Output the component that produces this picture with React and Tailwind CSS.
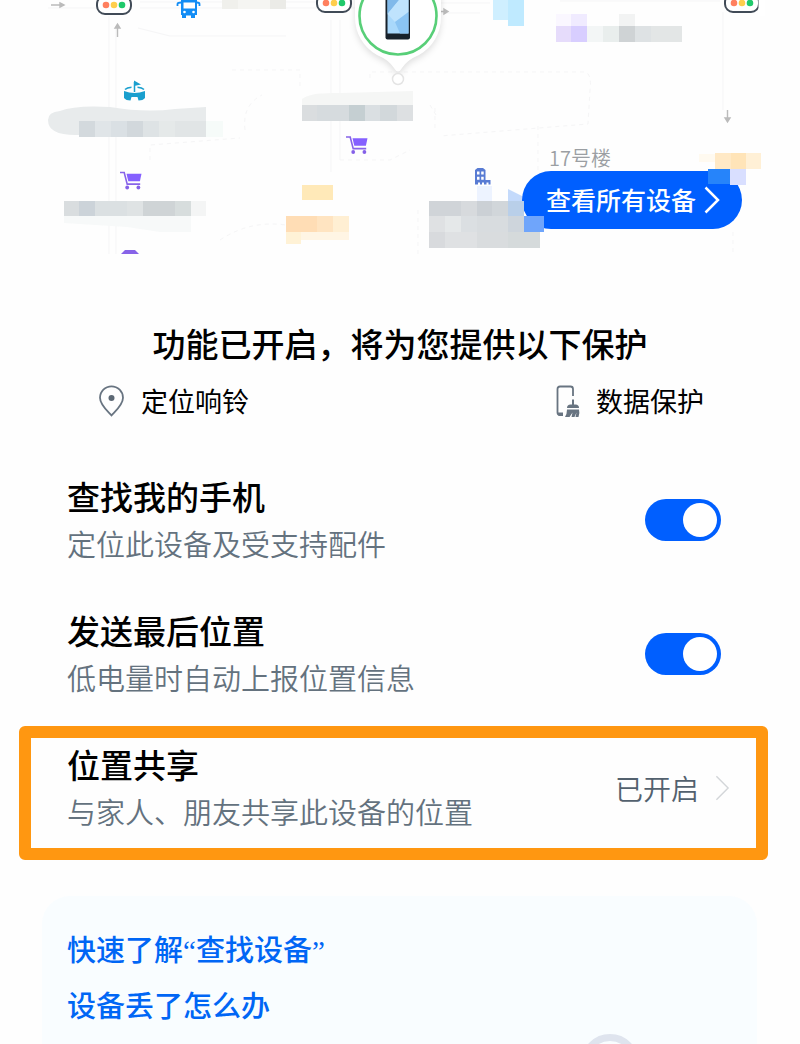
import React from "react";

const mosaic = [
  // top edge
  [222, 0, 16, 9, "#f0f0ec"], [238, 0, 32, 9, "#f5f5f2"], [270, 0, 16, 9, "#ebebe7"],
  // pale blue block
  [493, 0, 16, 20, "#cfefff"], [508, 0, 16, 26, "#bfeaff"],
  // lilac and grey strip
  [556, 14, 15, 12, "#faf7ff"], [571, 14, 16, 12, "#f0ebff"], [619, 14, 16, 12, "#f2f3f3"],
  [556, 26, 15, 16, "#e6dcfb"], [571, 26, 16, 16, "#d8ceff"], [587, 26, 16, 16, "#f3f6f6"],
  [603, 26, 16, 16, "#e9eeed"], [619, 26, 16, 16, "#cfd3d5"], [635, 26, 16, 16, "#dee2e4"],
  [651, 26, 31, 16, "#e3e6e6"],
  // left strip, lower row
  [79, 121, 16, 16, "#d3d9dd"], [95, 121, 16, 16, "#e0e5e8"], [111, 121, 16, 16, "#dae0e4"],
  [127, 121, 16, 16, "#d2d8dc"], [143, 121, 16, 16, "#dee3e5"], [159, 121, 16, 16, "#e5e9e9"],
  [175, 121, 31, 16, "#e1e5e6"], [206, 121, 17, 16, "#f6fbf9"],
  // centre strip
  [302, 105, 15, 16, "#dadddf"], [317, 105, 32, 16, "#d6dbde"], [349, 105, 16, 16, "#c5cfd2"],
  [365, 105, 15, 16, "#dadfe2"], [380, 105, 17, 16, "#d2d8db"], [397, 105, 16, 16, "#dde0e2"],
  // lower-left strip
  [64, 201, 15, 15, "#d9dddf"], [79, 201, 16, 15, "#ccd3d9"], [95, 201, 32, 15, "#dbe0e2"],
  [127, 201, 16, 15, "#dfe3e4"], [143, 201, 32, 15, "#cfd4d6"], [175, 201, 16, 15, "#d7dddd"],
  [191, 201, 15, 15, "#f4f5f5"],
  // sand blocks
  [302, 185, 31, 15, "#ffe9b8"],
  [286, 216, 31, 16, "#ffddb5"], [317, 216, 16, 16, "#ffe4c1"], [333, 216, 16, 16, "#ffefd3"],
  [286, 232, 15, 12, "#fff2d6"], [301, 232, 48, 8, "#fff5e4"],
  // grey block beside the button
  [477, 186, 15, 15, "#edf3ff"],
  [429, 201, 32, 15, "#d0d4d8"], [461, 201, 16, 15, "#d7dadd"], [477, 201, 15, 15, "#cbd0d5"],
  [492, 201, 16, 15, "#d1d6da"],
  [429, 216, 16, 16, "#dfe1e3"], [445, 216, 16, 16, "#e5e8e9"], [461, 216, 16, 16, "#dbdfe2"],
  [477, 216, 31, 16, "#d8dcdf"], [508, 216, 16, 16, "#ced5dc"],
  [429, 232, 16, 16, "#d8dadd"], [445, 232, 32, 16, "#dfe1e3"], [477, 232, 31, 16, "#d9dcde"],
];

const overlayMosaic = [
  [508, 201, 16, 15, "#b9cfe9"], [524, 216, 20, 16, "#6fa5fb"], [508, 232, 32, 16, "#d5dadb"],
  [699, 154, 16, 8, "#fffaf0"], [715, 153, 16, 16, "#ffe9c6"], [731, 153, 15, 16, "#ffe4b8"],
  [746, 153, 15, 16, "#fff0d6"],
  [708, 169, 22, 15, "#2684fa"], [730, 169, 16, 16, "#d9dfff"],
];

function Blocks({ items }) {
  return items.map(([x, y, w, h, fill]) => (
    <rect key={`${x}-${y}`} x={x} y={y} width={w} height={h} fill={fill} />
  ));
}

function TrafficLight({ x, y }) {
  return (
    <g transform={`translate(${x} ${y})`}>
      <rect x="-17" y="-9" width="34" height="18" rx="8" fill="#fff" stroke="#414b57" strokeWidth="2" />
      <circle cx="-8" r="3.3" fill="#ff805f" />
      <circle cx="0" r="3.3" fill="#ffce4d" />
      <circle cx="8" r="3.3" fill="#20c96b" />
    </g>
  );
}

function Cart({ x, y }) {
  return (
    <g transform={`translate(${x} ${y})`}>
      <path d="M0 1h4.2l3 11.6h13" fill="none" stroke="#8763e8" strokeWidth="1.6" />
      <path d="M6.5 2.2h15l-1.6 7.6H8.3z" fill="#8560ff" />
      <circle cx="7.2" cy="16" r="1.9" fill="#8560e8" />
      <circle cx="18.4" cy="16" r="1.9" fill="#8560e8" />
    </g>
  );
}

function MapDrawing() {
  return (
    <svg viewBox="0 0 800 254" className="block w-full" aria-hidden="true">
      <g fill="none" stroke="#f5f5f6" strokeWidth="1">
        <path d="M109 16V254M116 28V254M331 20V172M340 20V160M723 12V110" />
        <path d="M48 8H96M140 8H355M352 2H140M438 3H490M438 13H480M138 28L170 36H286M560 1H720" />
        <path d="M232 70H300V90M150 160V145L240 138M245 130Q242 105 262 95M370 78V72H585Q592 74 590 90L588 124L440 136M435 108V130M340 160H390L410 150" strokeDasharray="4 4" />
        <path d="M418 210V254M538 126V170M733 232V254M220 240Q250 220 286 225M430 105L436 115" strokeDasharray="4 4" />
      </g>
      <g stroke="#bbb" strokeWidth="1.4" fill="#bbb">
        <path d="M51 5H63M60 3L64 5L60 7zM117.500 37V26M115 28L117.500 24L120 28zM727.500 110V121M725 118L727.500 122L730 118zM440 11.500H446M444 9L448 11.500L444 14z" />
      </g>
      <path d="M48 120Q48 112 60 111Q75 105 110 107Q145 113 175 109L206 107V121H79V135Q48 136 48 120Z" fill="#e8ebec" />
      <path d="M64 216H191V232H160L127 227L64 223Z" fill="#f7f9f9" />
      <path d="M302 105V99Q310 92 340 93L413 91V105Z" fill="#f5f6f5" />
      <path d="M508 189L524 197V216H508Z" fill="#c4dafb" />
      <Blocks items={mosaic} />
      <TrafficLight x={114} y={5} />
      <TrafficLight x={334} y={3} />
      <TrafficLight x={742} y={3} />
      <rect x="758.500" width="6" height="16" fill="#fff" />

      <g fill="#138df5">
        <path d="M181 0H197V15H195V18H191V15.500H186V18H182V15H181Z" />
        <path d="M177.500 6V4Q177.500 2.500 181 2.500M199.500 6V4Q199.500 2.500 197 2.500" fill="none" stroke="#138df5" strokeWidth="1.800" />
        <path d="M183.500 2.500H195V8.500H183.500Z" fill="#fff" />
        <circle cx="184.500" cy="12" r="1.300" fill="#fff" />
        <circle cx="193.500" cy="12" r="1.300" fill="#fff" />
      </g>

      <g fill="#1a9fce">
        <path d="M124 91Q134.500 95 145 91V98Q143 100.500 138.500 100.500L137.500 97H131.500L130.500 100.500Q126 100.500 124 98Z" />
        <path d="M125 89.500Q127 87.500 131.500 87.200M144 89.500Q142 87.500 137.500 87.200M134.500 92V82" fill="none" stroke="#1a9fce" strokeWidth="1.500" />
        <path d="M134 80.500L141 84.500L134 86Z" />
      </g>

      <Cart x={120} y={171.500} />
      <Cart x={346} y={136} />
      <path d="M121 254L125 250H135L139 254Z" fill="#8763e8" />

      <g fill="#587bd3">
        <path d="M475 170L477.500 168H483L485.500 170V180H490.500V184.500H488.500V182.500H486.500V184.500H484V182.500H482V184.500H480V182.500H478V184.500H475Z" />
        <path d="M477 171.500h2.500v3h-2.500zM481.200 171.500h2.500v3h-2.500zM477 176.800h2.500v3h-2.500zM481.200 176.800h2.500v3h-2.500z" fill="#fff" />
      </g>

      <path
        d="M355 17A43 43 0 0 0 377 55Q389 60 394 68Q398 75 402 68Q407 60 419 55A43 43 0 0 0 441 17V-20H355Z"
        fill="#fff"
        className="drop-shadow-md"
      />
      <circle cx="398" cy="16" r="38.500" fill="#fff" stroke="#58cf78" strokeWidth="2.600" />
      <circle cx="398" cy="79" r="5.500" fill="#fff" stroke="#e4e4e4" strokeWidth="1.500" />
      <rect x="385.500" y="-8" width="24.500" height="47.500" rx="2" fill="#17212b" />
      <path d="M387.500 0H408.500V33.500H387.500Z" fill="#a9d8fb" />
      <path d="M387.500 0H399L387.500 14Z" fill="#80b9ea" />
      <path d="M399 0H408.500V12L395 22L387.500 14Z" fill="#bfe3fd" />
      <path d="M408.500 12V33.500H400L395 22Z" fill="#8bc4f3" />
    </svg>
  );
}

function Chevron({ className }) {
  return (
    <svg viewBox="0 0 16 28" className={className} fill="none" stroke="currentColor" aria-hidden="true">
      <path d="M1.500 1.500L14 14L1.500 26.500" />
    </svg>
  );
}

function SettingText({ title, detail }) {
  return (
    <span className="block">
      <span className="block text-[33px] leading-[46px] font-medium text-black">{title}</span>
      <span className="block text-[29px] leading-[48px] font-[350] text-[#64727e]">{detail}</span>
    </span>
  );
}

function ToggleRow({ title, detail }) {
  return (
    <label className="flex items-center justify-between pt-[15px] pr-[79px] pb-[25px] pl-[67px]">
      <SettingText title={title} detail={detail} />
      <input
        type="checkbox"
        role="switch"
        defaultChecked
        className="flex h-[42px] w-[76px] shrink-0 appearance-none items-center rounded-full bg-[#c5ccd3] p-1 before:size-[34px] before:rounded-full before:bg-white before:content-[''] checked:justify-end checked:bg-[#005fff]"
      />
    </label>
  );
}

export default function App() {
  return (
    <main
      lang="zh-CN"
      className="flex min-h-screen flex-col overflow-hidden bg-[#fefefe] font-['Noto_Sans_CJK_SC',sans-serif]"
    >
      <section className="relative" aria-label="地图">
        <MapDrawing />
        <span className="absolute top-[143px] right-[189px] text-[20px] leading-[30px] font-[350] text-[#9b9fa3]">
          17号楼
        </span>
        <button
          type="button"
          className="absolute top-[171px] right-[58px] flex h-[58px] w-[220px] items-center gap-2 rounded-full bg-[#005fff] pl-6 text-[25px] font-medium whitespace-nowrap text-white"
        >
          查看所有设备
          <Chevron className="h-7 w-4 stroke-[2.5]" />
        </button>
        <svg viewBox="0 0 800 254" className="pointer-events-none absolute inset-0 w-full" aria-hidden="true">
          <Blocks items={overlayMosaic} />
        </svg>
      </section>

      <h1 className="mt-[69px] text-center text-[33px] leading-[40px] font-medium text-black">
        功能已开启，将为您提供以下保护
      </h1>

      <ul className="mt-[18px] mb-[37px] flex justify-between pr-24 pl-[98px] text-[27px] leading-[40px] text-black">
        <li className="flex items-center gap-4">
          <svg viewBox="0 0 27 32" className="h-8 w-[27px]" fill="none" aria-hidden="true">
            <path d="M13.500 30.500C10 26.500 2 20 2 12.800A11.500 11.500 0 0 1 25 12.800C25 20 17 26.500 13.500 30.500Z" stroke="#687481" strokeWidth="1.800" />
            <circle cx="13.500" cy="13" r="3" fill="#5c6874" />
          </svg>
          定位响铃
        </li>
        <li className="flex items-center gap-4">
          <svg viewBox="0 0 24 32" className="h-8 w-6" fill="none" aria-hidden="true">
            <path d="M6.500 30H4Q1.500 30 1.500 27.500V4Q1.500 1.500 4 1.500H14.500Q17 1.500 17 4V11" stroke="#687481" strokeWidth="1.800" />
            <path d="M2 27.500H7V31H4Q2 31 2 29Z" fill="#687481" />
            <path d="M16 14.500H18V20H16Z" fill="#687481" />
            <path d="M11 23Q11 19.500 14.500 19.500H19.500Q23 19.500 23 23Z" fill="#687481" />
            <path d="M11 24.500H23Q24 28 22.500 32H19.500L20.500 27.500L18.500 32H15.500L16.500 27.500L13.500 32H9Q11 29 11 24.500Z" fill="#687481" />
          </svg>
          数据保护
        </li>
      </ul>

      <ToggleRow title="查找我的手机" detail="定位此设备及受支持配件" />
      <ToggleRow title="发送最后位置" detail="低电量时自动上报位置信息" />

      <button
        type="button"
        className="mr-8 ml-[19px] flex items-center justify-between rounded-[6px] border-[12px] border-[#ff9711] pt-[3px] pr-[26px] pb-[13px] pl-9 text-left"
      >
        <SettingText title="位置共享" detail="与家人、朋友共享此设备的位置" />
        <span className="flex items-center gap-4 text-[28px] leading-[44px] font-[350] text-[#53616e]">
          已开启
          <Chevron className="h-7 w-[15px] stroke-[1.5] text-[#d3d6d9]" />
        </span>
      </button>

      <nav className="relative mt-9 mr-[43px] ml-[42px] flex grow flex-col items-start gap-3 overflow-hidden rounded-t-[28px] bg-[#f9fdff] pt-[30px] pl-[25px] text-[29px] leading-[44px] font-medium text-[#0066f5]">
        <a href="#about">
          快速了解<span className="font-['Liberation_Serif',serif] leading-none">“</span>查找设备
          <span className="font-['Liberation_Serif',serif] leading-none">”</span>
        </a>
        <a href="#lost">设备丢了怎么办</a>
        <svg viewBox="0 0 60 10" className="absolute right-[117px] bottom-0 h-[10px] w-[60px]" fill="none" aria-hidden="true">
          <circle cx="30" cy="29" r="25.500" stroke="#dfe4ee" strokeWidth="7" />
        </svg>
      </nav>
    </main>
  );
}
